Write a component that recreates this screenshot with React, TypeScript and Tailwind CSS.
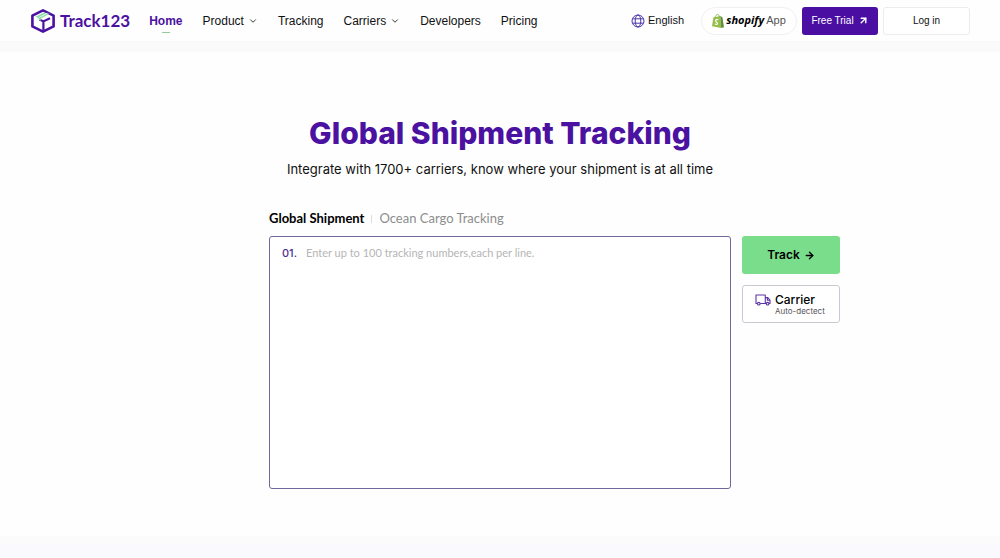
import { useState } from "react";
import { ArrowRight, ArrowUpRight, ChevronDown } from "lucide-react";
import clsx from "clsx";

const navItems = [
  { label: "Home", active: true },
  { label: "Product", menu: true },
  { label: "Tracking" },
  { label: "Carriers", menu: true },
  { label: "Developers" },
  { label: "Pricing" },
];

const tabs = ["Global Shipment", "Ocean Cargo Tracking"];

function LogoMark() {
  return (
    <svg viewBox="0 0 26 26" className="size-[26px]" fill="none" aria-hidden="true">
      <path d="M13 2.4 23.6 7.6v10.8L13 23.6 2.4 18.4V7.6z" stroke="#4b11a0" strokeWidth="2.6" strokeLinejoin="round" />
      <path d="M9.4 11.6 13.4 13.4l6.6-3.2M13.4 13.4v9" stroke="#4b11a0" strokeWidth="2.2" />
      <path d="M5.4 8.8 14.2 4.4l5.4 1.4-8.8 4.8v2.2L8.6 12v-2z" fill="#8fdcaa" />
      <path d="M9.4 9.2 17.2 5.2" stroke="#fff" strokeWidth=".7" />
    </svg>
  );
}

function GlobeIcon() {
  return (
    <svg viewBox="0 0 14 14" className="size-[14px]" fill="none" stroke="#4b34a8" aria-hidden="true">
      <circle cx="7" cy="7" r="6" />
      <ellipse cx="7" cy="7" rx="2.8" ry="6" />
      <path d="M1.6 4.8h10.8M1.6 9.2h10.8" />
    </svg>
  );
}

function ShopifyBag() {
  return (
    <svg viewBox="0 0 12 14" className="h-[14px] w-3" aria-hidden="true">
      <path d="M1.4 3.5 8.3 2l.9 12L0 12.3z" fill="#95bf47" />
      <path d="M8.3 2 10.4 3.2 12 13.3 9.2 14z" fill="#5e8e3e" />
      <path d="M3 4C3.2 1.8 4.6.5 5.6.5c1 0 1.6 1.2 1.6 2.6" fill="none" stroke="#7aa83b" strokeWidth=".8" />
      <path d="M6.4 5.8c-1.6-.8-3-.1-2.8 1.2.2 1.2 2 1.3 1.9 2.6 0 1.2-1.6 1.1-2.6.3" fill="none" stroke="#fff" strokeWidth="1.2" />
    </svg>
  );
}

function TruckIcon() {
  return (
    <svg viewBox="0 0 16 12" className="h-3 w-4 shrink-0" fill="none" stroke="#5b34a6" strokeWidth="1.1" strokeLinejoin="round" aria-hidden="true">
      <path d="M2.5 9.5H1V1h9.3v8.5H5.2M10.3 3.6h2.5L15 6.2v3.3h-1M10.3 9.5h1" />
      <circle cx="3.8" cy="9.7" r="1.3" />
      <circle cx="12.6" cy="9.7" r="1.3" />
      <path d="M12.4 3.8v2.5H15" />
    </svg>
  );
}

function Header() {
  return (
    <header className="flex h-[42px] items-center justify-between border-b border-[#f8f8f8] bg-[#fefefe] px-[30px] font-['Liberation_Sans',Arial,sans-serif] shadow-[0_10px_0_#fafafa]">
      <div className="flex items-center">
        <a href="#" className="flex items-center gap-1">
          <LogoMark />
          <span className="font-['Lato',sans-serif] text-[17px] font-bold text-[#4b11a0]">Track123</span>
        </a>
        <nav className="ml-[19px] flex items-center gap-5 text-xs text-[#111]">
          {navItems.map((item) => (
            <a
              key={item.label}
              href="#"
              className={clsx("relative flex items-center gap-1", item.active && "font-bold text-[#4b11a0]")}
            >
              {item.label}
              {item.menu && <ChevronDown size={10} strokeWidth={2} />}
              {item.active && <span className="absolute -bottom-1 left-1/2 h-px w-2 -translate-x-1/2 bg-[#8fcf9f]" />}
            </a>
          ))}
        </nav>
      </div>

      <div className="flex items-center gap-[5px] text-[10px]">
        <button type="button" className="mr-3 flex items-center gap-[3px] text-[11px] text-[#111]">
          <GlobeIcon />
          English
        </button>
        <a href="#" className="flex h-7 w-[96px] items-center justify-center gap-[2px] rounded-full border border-[#f0f0f0] bg-white text-[11px] text-[#555]">
          <ShopifyBag />
          <span className="font-['Open_Sans',sans-serif] font-bold italic text-black">shopify</span>
          App
        </a>
        <button type="button" className="flex h-7 w-[76px] items-center justify-center gap-1 rounded-[3px] bg-[#4b0ea3] text-white">
          Free Trial
          <ArrowUpRight size={11} strokeWidth={3} />
        </button>
        <button type="button" className="h-7 w-[87px] rounded-[3px] border border-[#ececec] bg-white text-[#111]">
          Log in
        </button>
      </div>
    </header>
  );
}

export default function App() {
  const [tab, setTab] = useState(tabs[0]);
  const [numbers, setNumbers] = useState("");

  return (
    <div className="flex min-h-screen flex-col bg-[#fefefe] font-['Inter',sans-serif]">
      <Header />

      <main className="pt-[71px] pb-[47px]">
        <h1 className="text-center text-[30px] leading-10 font-extrabold text-[#4b11a0]">Global Shipment Tracking</h1>
        <p className="mt-1 text-center text-[13px] leading-6 text-[#111]">
          Integrate with 1700+ carriers, know where your shipment is at all time
        </p>

        <div className="mt-7 grid grid-cols-[1fr_462px_1fr] gap-x-[11px]">
          {/* Tracking mode */}
          <div className="col-start-2 flex h-5 items-center font-['Lato',sans-serif] text-[13px]">
            {tabs.map((name, idx) => (
              <div key={name} className="flex items-center">
                {idx > 0 && <span className="mx-[7px] h-2 w-px bg-[#ddd]" />}
                <button
                  type="button"
                  onClick={() => setTab(name)}
                  className={tab === name ? "font-bold text-black" : "text-[#8d8d8d]"}
                >
                  {name}
                </button>
              </div>
            ))}
          </div>

          {/* Tracking numbers */}
          <div className="col-start-2 mt-[7px] flex h-[253px] gap-[9px] rounded-[3px] border border-[#7168a0] bg-white px-3 py-2 text-[11px] leading-4">
            <label htmlFor="numbers" className="font-medium text-[#4b2f92]">
              01.
            </label>
            <textarea
              id="numbers"
              value={numbers}
              onChange={(e) => setNumbers(e.target.value)}
              placeholder="Enter up to 100 tracking numbers,each per line."
              className="h-full flex-1 resize-none font-['Lato',sans-serif] outline-none placeholder:text-[#b5b5b5]"
            />
          </div>

          {/* Actions */}
          <div className="mt-[7px] flex w-[98px] flex-col gap-[11px]">
            <button type="button" className="flex h-[38px] items-center justify-center gap-1 rounded-[3px] bg-[#7add8b] text-xs font-semibold text-black">
              Track
              <ArrowRight size={11} strokeWidth={3} />
            </button>
            <button type="button" className="flex h-[38px] items-start gap-1 rounded-[3px] border border-[#cbc8d4] bg-white px-3 pt-2 text-left">
              <TruckIcon />
              <span>
                <span className="block text-xs leading-3 font-medium text-black">Carrier</span>
                <span className="block text-[8px] leading-[10px] text-[#555]">Auto-dectect</span>
              </span>
            </button>
          </div>
        </div>
      </main>

      <section className="flex-1 border-t-8 border-[#fbfbfc] bg-[#faf9fd]" />
    </div>
  );
}
